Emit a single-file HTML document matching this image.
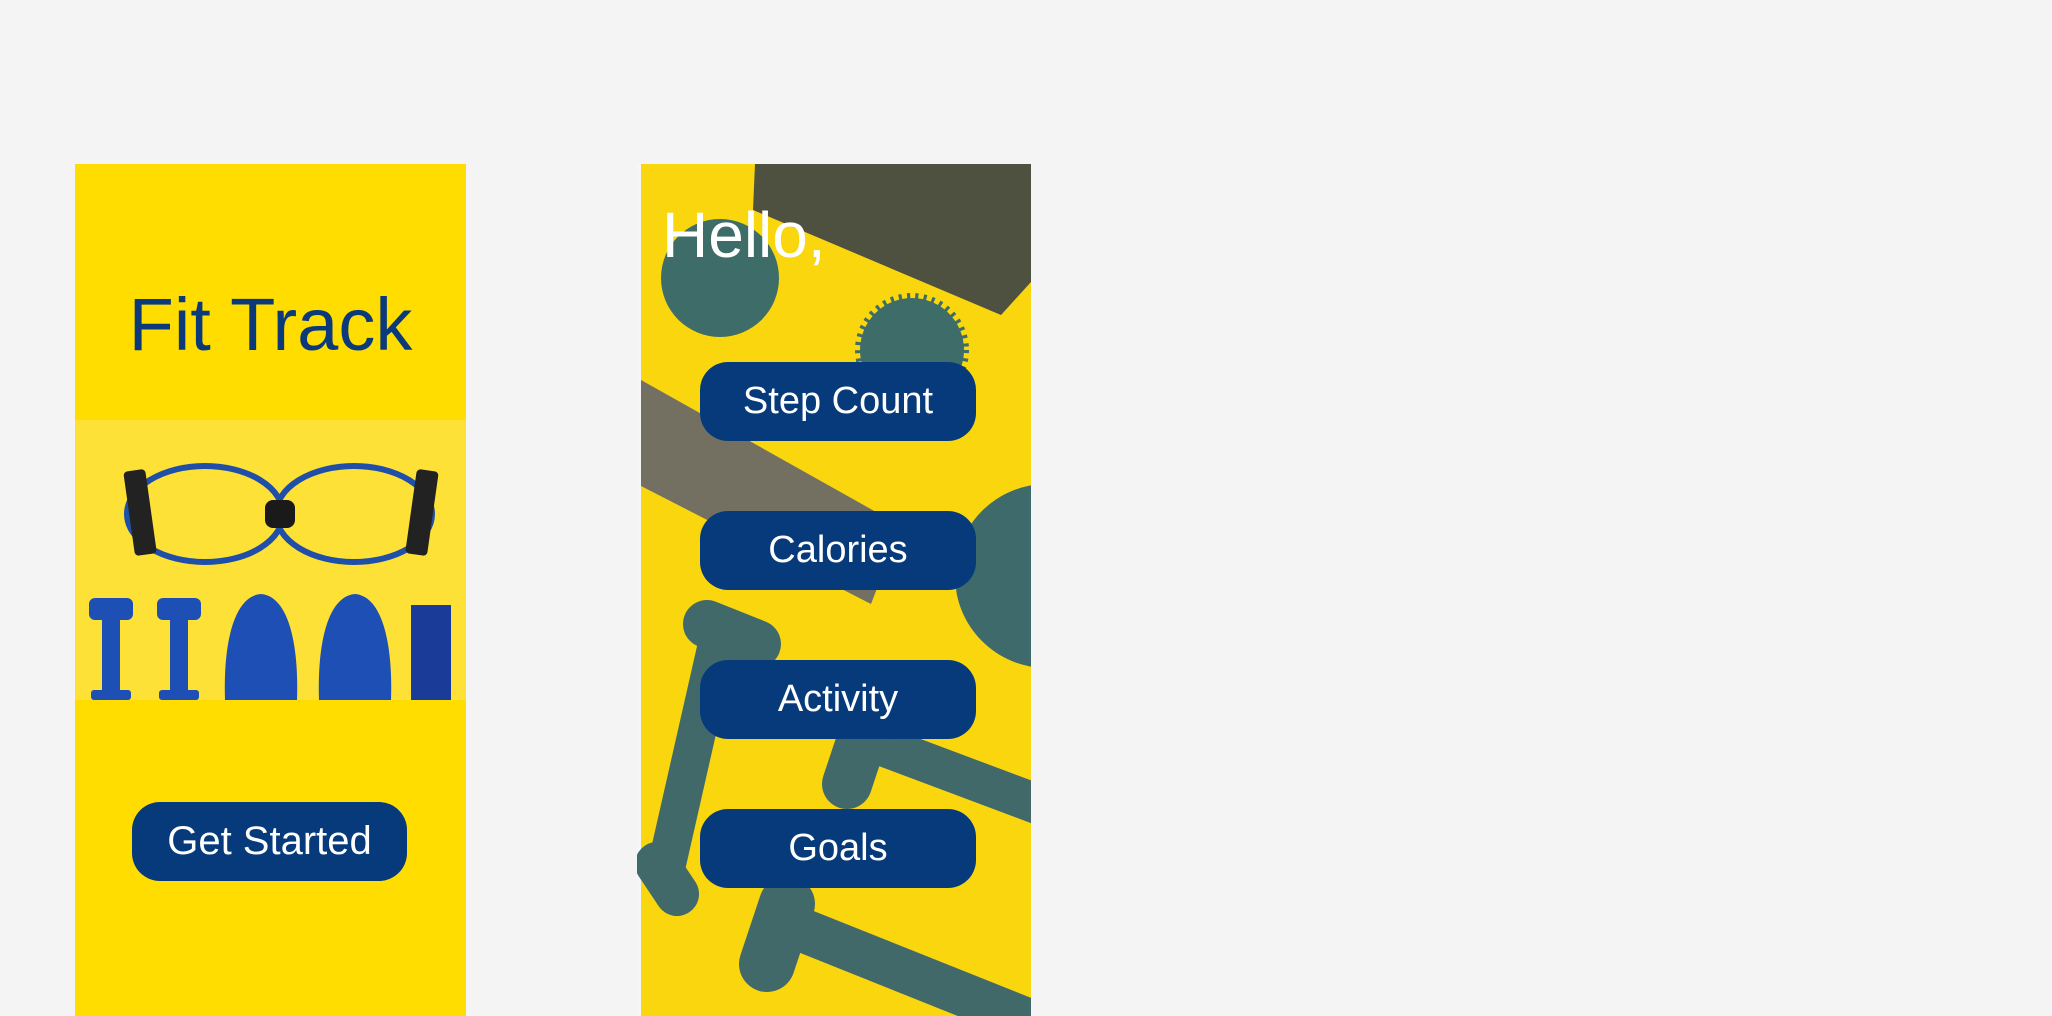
<!DOCTYPE html>
<html><head><meta charset="utf-8"><style>
html,body{margin:0;padding:0;background:#f4f4f4;width:2052px;height:1016px;overflow:hidden;font-family:"Liberation Sans",sans-serif;}
.p{position:absolute;}
.btn{position:absolute;background:#073a7a;color:#fff;border-radius:28px;display:flex;align-items:center;justify-content:center;font-size:38px;}
</style></head><body>
<div class="p" style="left:75px;top:164px;width:391px;height:852px;background:#ffdd00;"></div>
<div class="p" style="left:75px;top:282px;width:391px;text-align:center;color:#0a3a7a;font-size:74px;">Fit Track</div>
<svg class="p" style="left:75px;top:420px" width="391" height="280">
<rect width="391" height="280" fill="#fde136"/>
<g fill="none" stroke="#1f4fa8" stroke-width="6">
<ellipse cx="130" cy="94" rx="78" ry="48"/><ellipse cx="279" cy="94" rx="78" ry="48"/></g>
<rect x="190" y="80" width="30" height="28" rx="8" fill="#1a1a1a"/>
<rect x="54" y="50" width="22" height="85" rx="4" fill="#222" transform="rotate(-8 65 92)"/>
<rect x="336" y="50" width="22" height="85" rx="4" fill="#222" transform="rotate(8 347 92)"/>
<g fill="#1e4fb5">
<rect x="14" y="178" width="44" height="22" rx="6"/><rect x="27" y="195" width="18" height="80" rx="5"/><rect x="16" y="270" width="40" height="10" rx="3"/>
<rect x="82" y="178" width="44" height="22" rx="6"/><rect x="95" y="195" width="18" height="80" rx="5"/><rect x="84" y="270" width="40" height="10" rx="3"/>
<path d="M150 280 C148 220 160 176 186 174 C212 176 224 220 222 280Z"/>
<path d="M244 280 C242 220 254 176 280 174 C306 176 318 220 316 280Z"/>
<rect x="336" y="185" width="40" height="95" fill="#1a3c98"/>
</g>
</svg>
<div class="btn" style="left:132px;top:802px;width:275px;height:79px;font-size:40px;">Get Started</div>

<svg class="p" style="left:637px;top:164px" width="394" height="852">
<rect width="394" height="852" fill="#f6f6f6"/>
<rect x="4" width="390" height="852" fill="#fad60e"/>
<polygon points="118,0 394,0 394,118 364,151 116,46" fill="#4e5040"/>
<circle cx="83" cy="114" r="59" fill="#3e6d69"/>
<circle cx="275" cy="186" r="52" fill="#3e6d69" stroke="#3e6d69" stroke-width="10" stroke-dasharray="3 5"/>
<polygon points="4,216 264,362 234,440 4,322" fill="#737062"/>
<circle cx="410" cy="412" r="92" fill="#3e6a6c"/>
<g stroke="#41696a" stroke-linecap="round" fill="none">
<line x1="80" y1="480" x2="30" y2="700" stroke-width="38"/>
<line x1="70" y1="460" x2="120" y2="480" stroke-width="48"/>
<line x1="20" y1="700" x2="40" y2="730" stroke-width="44"/>
<line x1="240" y1="580" x2="400" y2="640" stroke-width="40"/>
<line x1="230" y1="560" x2="210" y2="620" stroke-width="50"/>
<line x1="150" y1="760" x2="400" y2="860" stroke-width="44"/>
<line x1="150" y1="740" x2="130" y2="800" stroke-width="56"/>
</g>
</svg>
<div class="p" style="left:662px;top:198px;color:#fff;font-size:64px;">Hello,</div>
<div class="btn" style="left:700px;top:362px;width:276px;height:79px;">Step Count</div>
<div class="btn" style="left:700px;top:511px;width:276px;height:79px;">Calories</div>
<div class="btn" style="left:700px;top:660px;width:276px;height:79px;">Activity</div>
<div class="btn" style="left:700px;top:809px;width:276px;height:79px;">Goals</div>
</body></html>
